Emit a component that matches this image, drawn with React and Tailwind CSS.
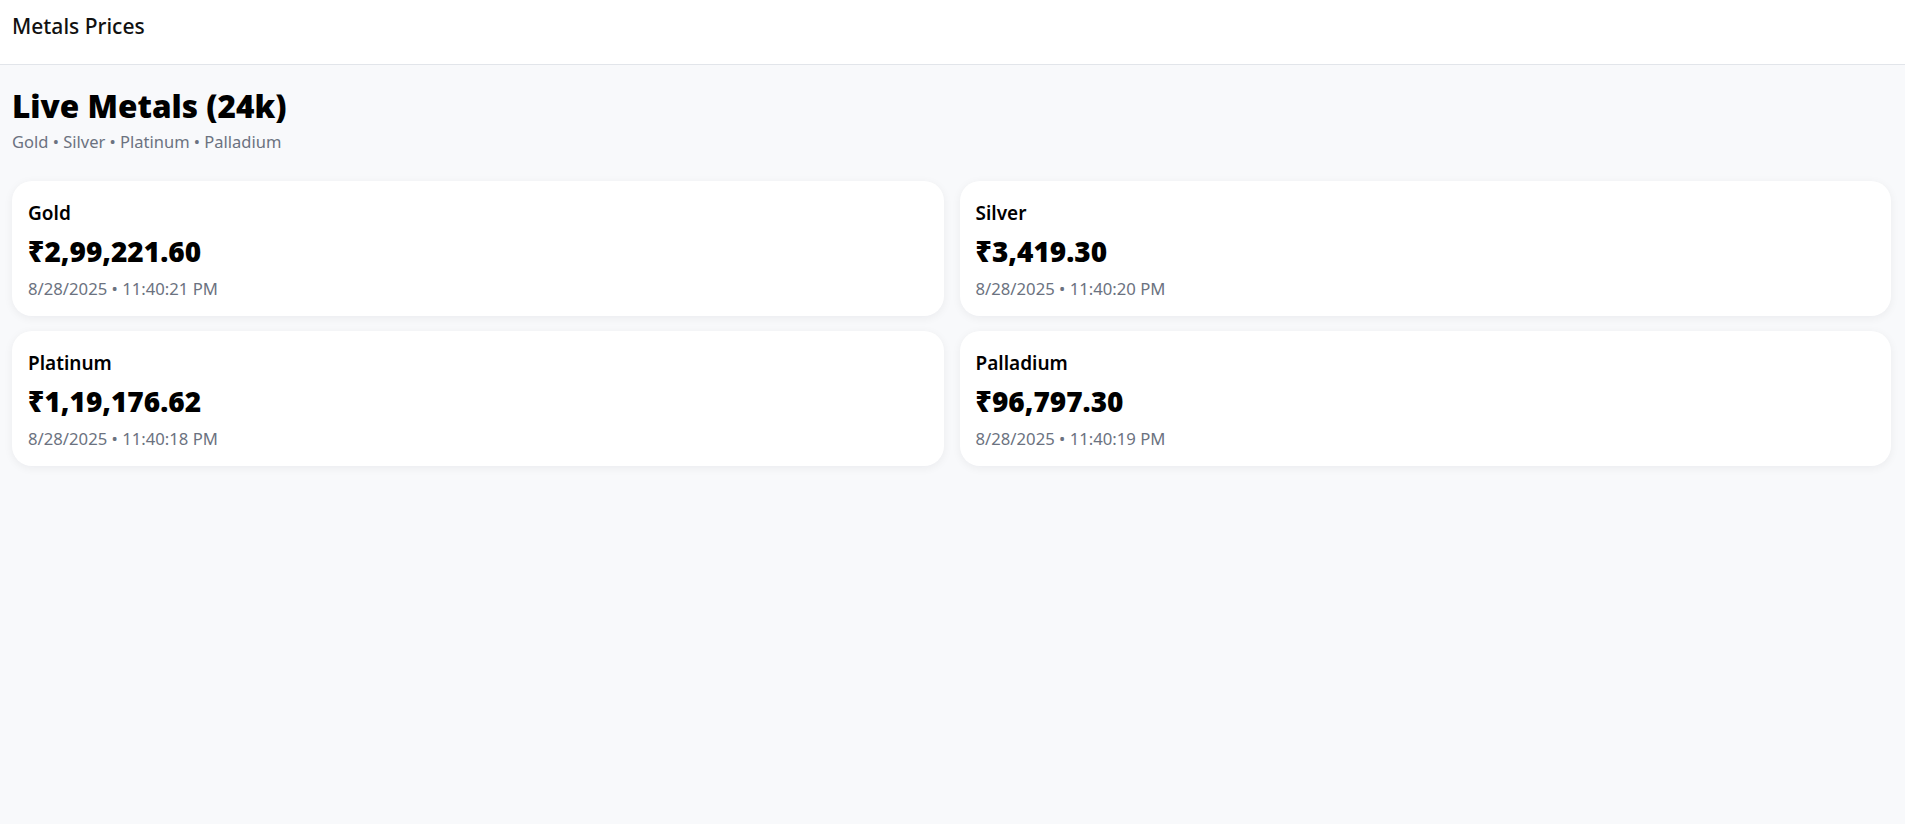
import React from 'react';

const metals = [
  { name: 'Gold', price: '₹2,99,221.60', time: '8/28/2025 • 11:40:21 PM' },
  { name: 'Silver', price: '₹3,419.30', time: '8/28/2025 • 11:40:20 PM' },
  { name: 'Platinum', price: '₹1,19,176.62', time: '8/28/2025 • 11:40:18 PM' },
  { name: 'Palladium', price: '₹96,797.30', time: '8/28/2025 • 11:40:19 PM' },
];

const MetalCard = ({ name, price, time }) => (
  <div className="bg-white rounded-[20px] shadow-[0_2px_10px_rgba(15,23,42,0.06)] px-4 pt-5 pb-[17px] flex flex-col">
    <div className="text-[19px] leading-[24px] font-semibold text-black">{name}</div>
    <div className="mt-[10px] text-[28px] leading-[32px] font-black text-black">{price}</div>
    <div className="mt-[12px] text-[16.7px] leading-[20px] text-[#6b7280]">{time}</div>
  </div>
);

export default function App() {
  return (
    <div className="min-h-screen bg-[#f8f9fb] font-['Segoe_UI','Noto_Sans',sans-serif]">
      {/* Top bar */}
      <header className="h-[65px] bg-white border-b border-[#e2e5ea] px-3 pt-[10px]">
        <h1 className="text-[21px] leading-[32px] font-medium text-[#111]">Metals Prices</h1>
      </header>

      <main className="pl-3 pr-[14px] pt-[21px]">
        <h2 className="text-[31.5px] leading-[40px] font-black text-black">Live Metals (24k)</h2>
        <p className="mt-[4px] text-[16.5px] leading-[24px] text-[#6b7280]">
          Gold • Silver • Platinum • Palladium
        </p>

        <div className="mt-[27px] grid grid-cols-2 gap-x-4 gap-y-[15px]">
          {metals.map((m) => (
            <MetalCard key={m.name} {...m} />
          ))}
        </div>
      </main>
    </div>
  );
}
